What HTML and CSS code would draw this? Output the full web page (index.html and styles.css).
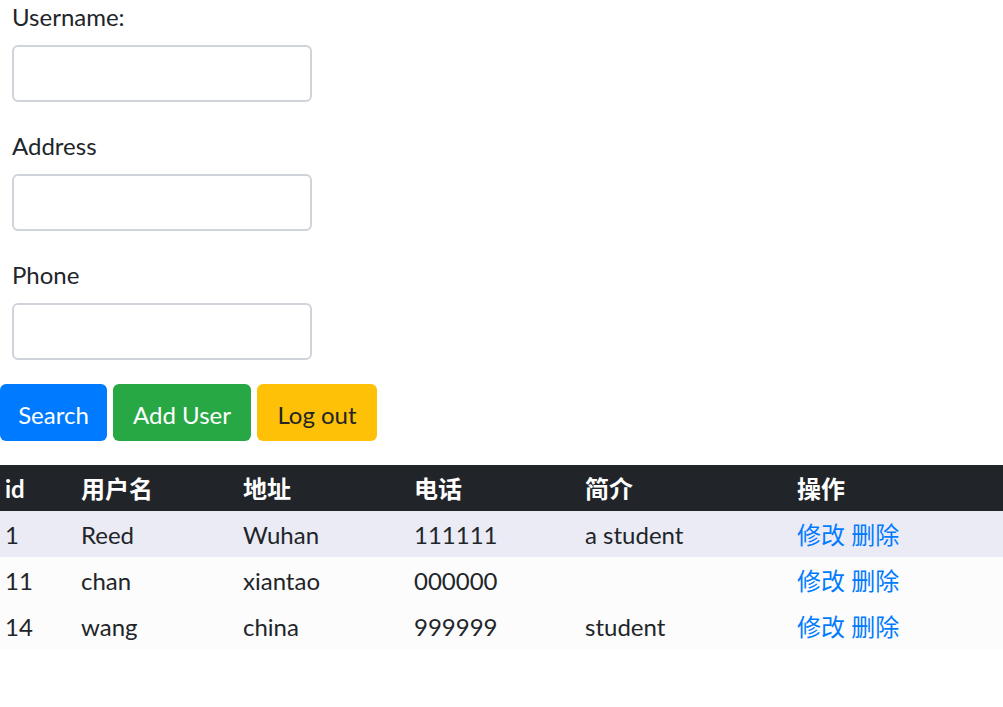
FILE: index.html
```html
<!DOCTYPE html>
<html lang="zh">
<head>
<meta charset="utf-8">
<title>Users</title>
<link rel="stylesheet" href="styles.css">
</head>
<body>
<form class="search-form">
  <div class="fields">
    <div class="form-group">
      <label class="label">Username:</label>
      <input class="form-control" type="text">
    </div>
    <div class="form-group">
      <label class="label">Address</label>
      <input class="form-control" type="text">
    </div>
    <div class="form-group">
      <label class="label">Phone</label>
      <input class="form-control" type="text">
    </div>
  </div>
  <div class="actions">
    <button type="button" class="btn btn-primary">Search</button>
    <button type="button" class="btn btn-success">Add User</button>
    <button type="button" class="btn btn-warning">Log out</button>
  </div>
</form>
<table class="table">
  <colgroup>
    <col class="c-id"><col class="c-name"><col class="c-addr"><col class="c-phone"><col class="c-intro"><col class="c-op">
  </colgroup>
  <thead>
    <tr><th>id</th><th>用户名</th><th>地址</th><th>电话</th><th>简介</th><th>操作</th></tr>
  </thead>
  <tbody>
    <tr class="row-odd"><td>1</td><td>Reed</td><td>Wuhan</td><td>111111</td><td>a student</td><td><a href="#">修改</a> <a href="#">删除</a></td></tr>
    <tr class="row-even"><td>11</td><td>chan</td><td>xiantao</td><td>000000</td><td></td><td><a href="#">修改</a> <a href="#">删除</a></td></tr>
    <tr class="row-even"><td>14</td><td>wang</td><td>china</td><td>999999</td><td>student</td><td><a href="#">修改</a> <a href="#">删除</a></td></tr>
  </tbody>
</table>
</body>
</html>
```

FILE: styles.css
```css
html, body {
  margin: 0;
  padding: 0;
  background: #ffffff;
}
body {
  font-family: "Lato", "Noto Sans CJK SC", sans-serif;
  font-size: 24px;
  line-height: 36px;
  color: #212529;
}
.search-form {
  margin: 0;
}
.fields {
  padding-left: 12px;
  margin-top: -3px;
}
.form-group {
  margin-bottom: 24px;
}
.label {
  display: block;
  padding-top: 2px;
  margin-bottom: 10px;
  line-height: 36px;
}
.form-control {
  display: block;
  box-sizing: border-box;
  width: 300px;
  height: 57px;
  padding: 9px 18px;
  border: 2px solid #ced4da;
  border-radius: 6px;
  background: #fff;
  font: inherit;
  margin: 0;
}
.actions {
  display: flex;
  gap: 6px;
  margin-bottom: 24px;
}
.btn {
  box-sizing: border-box;
  height: 57px;
  padding: 11px 16px 7px;
  border: 1px solid transparent;
  border-radius: 6px;
  font-family: "Lato", sans-serif;
  font-size: 24px;
  line-height: 36px;
  cursor: pointer;
}
.btn-primary { background: #007bff; color: #fff; width: 107px; }
.btn-success { background: #28a745; color: #fff; width: 138px; }
.btn-warning { background: #ffc107; color: #212529; width: 120px; }
.table {
  width: 100%;
  border-collapse: collapse;
  table-layout: fixed;
}
.c-id { width: 76px; }
.c-name { width: 162px; }
.c-addr { width: 171px; }
.c-phone { width: 171px; }
.c-intro { width: 212px; }
.table th, .table td {
  text-align: left;
  padding: 6px 5px 4px;
  height: 36px;
  line-height: 36px;
  white-space: nowrap;
}
.table thead th {
  background: #212529;
  color: #fff;
  font-weight: 700;
}
.row-odd { background: #ebebf5; }
.row-even { background: #fcfcfc; }
.table a {
  color: #007bff;
  text-decoration: none;
}
```
